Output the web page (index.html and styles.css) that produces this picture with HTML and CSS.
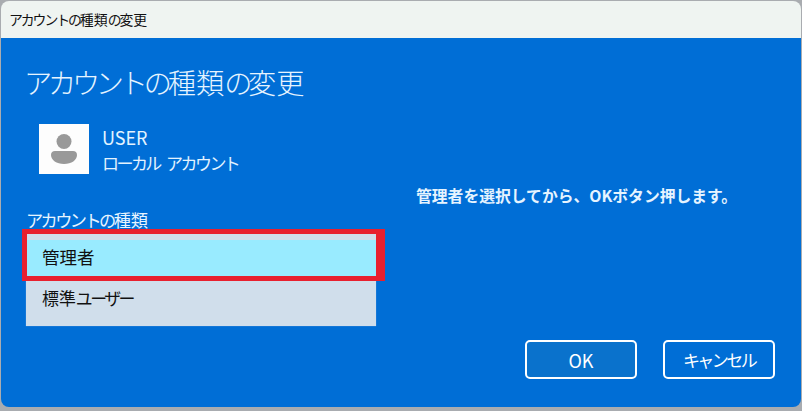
FILE: index.html
```html
<!DOCTYPE html>
<html>
<head>
    <title>アカウントの種類の変更</title>
    <link rel="stylesheet" href="styles.css">
</head>
<body>
    <div class="window">
        <div class="title-bar"><span class="k">アカウントの</span>種類<span class="k">の</span>変更</div>
        <div class="content">
            <h1 class="heading"><span class="k">アカウントの</span>種類<span class="k">の</span>変更</h1>
            <div class="main">
                <div class="left">
                    <div class="user">
                        <div class="avatar">
                            <svg width="50" height="50" viewBox="0 0 50 50">
                                <circle cx="25" cy="17.500" r="7.500" fill="#999"/>
                                <path d="M12 31c0-2.500 1.500-4 4-4h18c2.500 0 4 1.500 4 4 0 5-5.500 9-13 9s-13-4-13-9z" fill="#999"/>
                            </svg>
                        </div>
                        <div class="user-text">
                            <div class="user-name">USER</div>
                            <div class="k local">ローカル アカウント</div>
                        </div>
                    </div>
                    <div class="type-label"><span class="k">アカウントの</span>種類</div>
                    <div class="dropdown">
                        <div class="option selected">管理者</div>
                        <div class="option">標準<span class="k">ユーザー</span></div>
                        <div class="highlight"></div>
                    </div>
                </div>
                <div class="note">管理者を選択してから、OKボタン押します。</div>
            </div>
            <div class="buttons">
                <button class="btn btn-ok">OK</button>
                <button class="btn"><span class="k">キャンセル</span></button>
            </div>
        </div>
    </div>
</body>
</html>
```

FILE: styles.css
```css
html, body {
    height: 100%;
}
body {
    font-family: "Noto Sans CJK JP", "Noto Sans", sans-serif;
    background-color: #a9acb0;
    margin: 0;
    padding: 1px 1px 4px 1px;
    box-sizing: border-box;
    overflow: hidden;
}
/* kana are set narrower than kanji in the original font */
.k {
    letter-spacing: -0.15em;
}
.window {
    height: 100%;
    border-radius: 8px;
    overflow: hidden;
    display: flex;
    flex-direction: column;
}
.title-bar {
    height: 37px;
    background: #eff4f1;
    color: #111;
    font-size: 13.9px;
    line-height: 36px;
    padding-left: 8px;
}
.content {
    flex: 1;
    background: #006ed6;
    color: #fff;
    padding: 0 26px 28px 25px;
    display: flex;
    flex-direction: column;
}
.heading {
    margin: 0 0 0 -2px;
    padding-top: 25px;
    font-size: 28.2px;
    font-weight: 300;
    line-height: 38px;
    color: #e6f4ff;
}
.main {
    display: flex;
    flex: 1;
}
.left {
    width: 350px;
    margin-right: 40px;
}
.user {
    display: flex;
    margin: 23px 0 0 13px;
}
.avatar {
    width: 50px;
    height: 50px;
    background: #fdfdfd;
}
.user-text {
    margin-left: 13px;
    font-size: 17px;
    line-height: 26px;
    color: #e3f3ff;
}
.user-name {
    font-size: 18px;
}
.local {
    word-spacing: 5px;
}
.type-label {
    margin-top: 33px;
    font-size: 17.2px;
    line-height: 22px;
    color: #e6f4ff;
}
.dropdown {
    position: relative;
    margin-top: 3px;
    padding: 6px 0 0;
    background: #d0deeb;
    color: #111;
    box-shadow: 0 0 1px #7fa8d8;
}
.option {
    height: 50px;
    line-height: 44px;
    padding-left: 16px;
    font-size: 16.9px;
}
.selected {
    height: 36px;
    line-height: 34px;
    font-size: 17.5px;
    background: #99ebff;
}
.highlight {
    position: absolute;
    left: -4px;
    top: -5px;
    width: 349px;
    height: 42px;
    border: 5px solid #e8202e;
    border-right-width: 9px;
}
.note {
    margin-top: 84px;
    font-size: 15.8px;
    font-weight: 700;
    line-height: 22px;
    white-space: nowrap;
    color: #e6f4ff;
}
.buttons {
    display: flex;
    justify-content: flex-end;
    gap: 26px;
}
.btn {
    width: 112px;
    height: 39px;
    border: 2px solid #fff;
    border-radius: 5px;
    background: #006ed6;
    color: #fff;
    font-family: inherit;
    font-size: 17px;
}
.btn-ok {
    background: #0a72cc;
    font-size: 18px;
}
```
